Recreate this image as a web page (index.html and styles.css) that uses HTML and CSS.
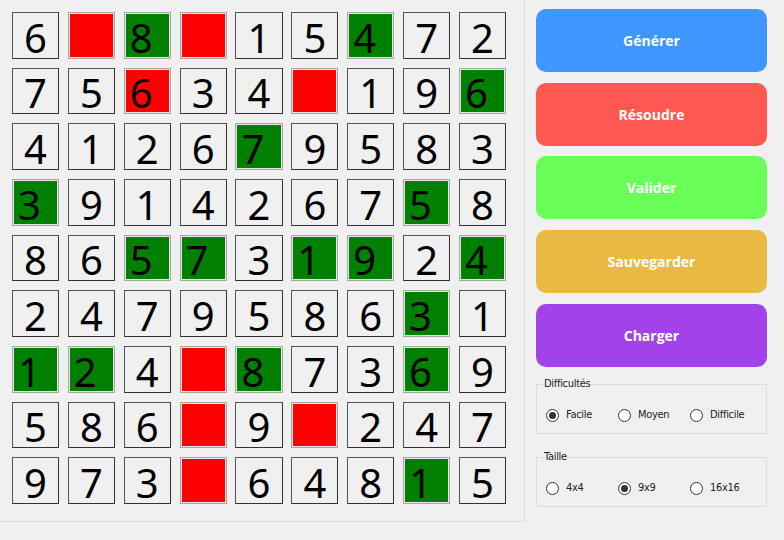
FILE: index.html
```html
<!DOCTYPE html>
<html lang="fr">
<head>
<meta charset="utf-8">
<title>Sudoku</title>
<link rel="stylesheet" href="styles.css">
</head>
<body>
<div class="app">
  <div class="board-panel">
    <div class="grid">
      <div class="cell">6</div><div class="cell red"></div><div class="cell green">8</div><div class="cell red"></div><div class="cell">1</div><div class="cell">5</div><div class="cell green">4</div><div class="cell">7</div><div class="cell">2</div>
      <div class="cell">7</div><div class="cell">5</div><div class="cell red">6</div><div class="cell">3</div><div class="cell">4</div><div class="cell red"></div><div class="cell">1</div><div class="cell">9</div><div class="cell green">6</div>
      <div class="cell">4</div><div class="cell">1</div><div class="cell">2</div><div class="cell">6</div><div class="cell green">7</div><div class="cell">9</div><div class="cell">5</div><div class="cell">8</div><div class="cell">3</div>
      <div class="cell green">3</div><div class="cell">9</div><div class="cell">1</div><div class="cell">4</div><div class="cell">2</div><div class="cell">6</div><div class="cell">7</div><div class="cell green">5</div><div class="cell">8</div>
      <div class="cell">8</div><div class="cell">6</div><div class="cell green">5</div><div class="cell green">7</div><div class="cell">3</div><div class="cell green">1</div><div class="cell green">9</div><div class="cell">2</div><div class="cell green">4</div>
      <div class="cell">2</div><div class="cell">4</div><div class="cell">7</div><div class="cell">9</div><div class="cell">5</div><div class="cell">8</div><div class="cell">6</div><div class="cell green">3</div><div class="cell">1</div>
      <div class="cell green">1</div><div class="cell green">2</div><div class="cell">4</div><div class="cell red"></div><div class="cell green">8</div><div class="cell">7</div><div class="cell">3</div><div class="cell green">6</div><div class="cell">9</div>
      <div class="cell">5</div><div class="cell">8</div><div class="cell">6</div><div class="cell red"></div><div class="cell">9</div><div class="cell red"></div><div class="cell">2</div><div class="cell">4</div><div class="cell">7</div>
      <div class="cell">9</div><div class="cell">7</div><div class="cell">3</div><div class="cell red"></div><div class="cell">6</div><div class="cell">4</div><div class="cell">8</div><div class="cell green">1</div><div class="cell">5</div>
    </div>
  </div>
  <div class="side">
    <button class="btn blue">Générer</button>
    <button class="btn coral">Résoudre</button>
    <button class="btn lime">Valider</button>
    <button class="btn gold">Sauvegarder</button>
    <button class="btn purple">Charger</button>
    <fieldset class="group">
      <legend>Difficultés</legend>
      <div class="radios">
        <label class="radio"><span class="dot checked"></span>Facile</label>
        <label class="radio"><span class="dot"></span>Moyen</label>
        <label class="radio"><span class="dot"></span>Difficile</label>
      </div>
    </fieldset>
    <fieldset class="group">
      <legend>Taille</legend>
      <div class="radios">
        <label class="radio"><span class="dot"></span>4x4</label>
        <label class="radio"><span class="dot checked"></span>9x9</label>
        <label class="radio"><span class="dot"></span>16x16</label>
      </div>
    </fieldset>
  </div>
</div>
</body>
</html>
```
FILE: styles.css
```css
html, body {
  margin: 0;
  padding: 0;
  background: #f0f0f0;
  width: 784px;
  height: 540px;
  overflow: hidden;
}

.app {
  display: flex;
  align-items: flex-start;
}

.board-panel {
  box-sizing: border-box;
  width: 525px;
  height: 522px;
  border: 1px solid #dcdcdc;
  border-left: none;
  border-top: none;
  padding: 12px 0 0 12px;
}

.grid {
  width: 494px;
  height: 492px;
  display: grid;
  grid-template-columns: repeat(9, minmax(0, 1fr));
  grid-template-rows: repeat(9, minmax(0, 1fr));
  column-gap: 8.8px;
  row-gap: 9px;
}

.cell {
  box-sizing: border-box;
  min-height: 0;
  border: 1px solid #555;
  border-right-color: #333;
  border-bottom-color: #333;
  background: #f0f0f0;
  font-family: "Noto Sans", "Open Sans", sans-serif;
  font-size: 40px;
  line-height: 46px;
  padding-top: 1.5px;
  text-align: center;
  color: #000;
}

.cell.red,
.cell.green {
  border: 1px solid #a8a8a8;
  box-shadow: inset 0 0 0 1px #e6e6e6;
  text-align: left;
  padding-left: 5px;
}

.cell.red { background: #ff0000; }
.cell.green { background: #008000; }

.side {
  width: 231px;
  margin-left: 11px;
  padding-top: 9px;
  display: flex;
  flex-direction: column;
}

.btn {
  height: 63px;
  border: none;
  border-radius: 10px;
  margin-bottom: 10.7px;
  color: #fff;
  font-family: "Open Sans", "Noto Sans", sans-serif;
  font-weight: bold;
  font-size: 14px;
  padding: 0;
}

.blue { background: #4096ff; }
.coral { background: #ff5850; }
.lime { background: #6aff58; }
.gold { background: #e8ba42; }
.purple { background: #a342e8; }

.group {
  margin: 1px 0 0 0;
  padding: 0;
  border: 1px solid #dcdcdc;
  height: 56px;
  box-sizing: border-box;
  font-family: "DejaVu Sans Condensed", "Liberation Sans", sans-serif;
  font-size: 11px;
  color: #222;
  letter-spacing: -0.3px;
}

.group + .group {
  margin-top: 17px;
}

.group legend {
  padding: 0;
  margin-left: 7px;
  line-height: 12px;
}

.radios {
  display: grid;
  grid-template-columns: 72px 72px 1fr;
  padding: 18px 0 0 9px;
}

.radio {
  display: flex;
  align-items: center;
  gap: 7px;
  line-height: 14px;
}

.dot {
  box-sizing: border-box;
  width: 13px;
  height: 13px;
  border: 1px solid #333;
  border-radius: 50%;
  background: #fff;
  display: flex;
  align-items: center;
  justify-content: center;
}

.dot.checked::after {
  content: "";
  width: 7px;
  height: 7px;
  border-radius: 50%;
  background: #333;
}
```
